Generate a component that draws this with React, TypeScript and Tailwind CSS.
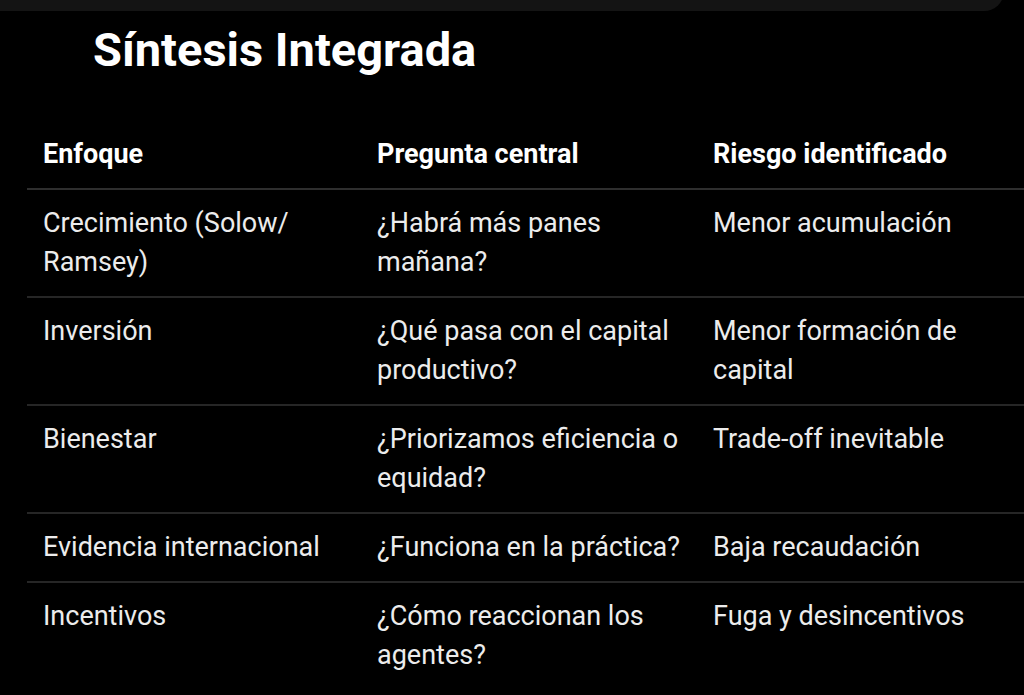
import React from "react";

interface Row {
  enfoque: string;
  pregunta: string;
  riesgo: string;
}

const rows: Row[] = [
  {
    enfoque: "Crecimiento (Solow/ Ramsey)",
    pregunta: "¿Habrá más panes mañana?",
    riesgo: "Menor acumulación",
  },
  {
    enfoque: "Inversión",
    pregunta: "¿Qué pasa con el capital productivo?",
    riesgo: "Menor formación de capital",
  },
  {
    enfoque: "Bienestar",
    pregunta: "¿Priorizamos eficiencia o equidad?",
    riesgo: "Trade-off inevitable",
  },
  {
    enfoque: "Evidencia internacional",
    pregunta: "¿Funciona en la práctica?",
    riesgo: "Baja recaudación",
  },
  {
    enfoque: "Incentivos",
    pregunta: "¿Cómo reaccionan los agentes?",
    riesgo: "Fuga y desincentivos",
  },
];

export default function App() {
  return (
    <div
      className="w-[1024px] h-[695px] overflow-hidden bg-black text-[#ececec]"
      style={{ fontFamily: "Roboto, 'Noto Sans', sans-serif" }}
    >
      {/* bottom edge of the card above */}
      <div className="w-[1004px] h-[30px] -mt-[19px] bg-[#141414] rounded-br-[20px]" />

      <h2 className="mt-[12px] pl-[93px] text-[47px] leading-[54px] font-bold text-white">
        Síntesis Integrada
      </h2>

      <table className="ml-[27px] mt-[44px] w-[1010px] table-fixed border-collapse text-[27px] leading-[39px]">
        <colgroup>
          <col className="w-[334px]" />
          <col className="w-[336px]" />
          <col />
        </colgroup>
        <thead>
          <tr className="border-b-2 border-[#2e2e2e]">
            <th className="px-4 py-[14px] text-left font-bold text-white">Enfoque</th>
            <th className="px-4 py-[14px] text-left font-bold text-white">Pregunta central</th>
            <th className="px-4 py-[14px] text-left font-bold text-white">Riesgo identificado</th>
          </tr>
        </thead>
        <tbody>
          {rows.map((row, i) => (
            <tr
              key={row.enfoque}
              className={i < rows.length - 1 ? "border-b-2 border-[#262626]" : ""}
            >
              <td className="px-4 py-[14px] align-top">{row.enfoque}</td>
              <td className="px-4 py-[14px] align-top">{row.pregunta}</td>
              <td className="px-4 py-[14px] align-top">{row.riesgo}</td>
            </tr>
          ))}
        </tbody>
      </table>
    </div>
  );
}
